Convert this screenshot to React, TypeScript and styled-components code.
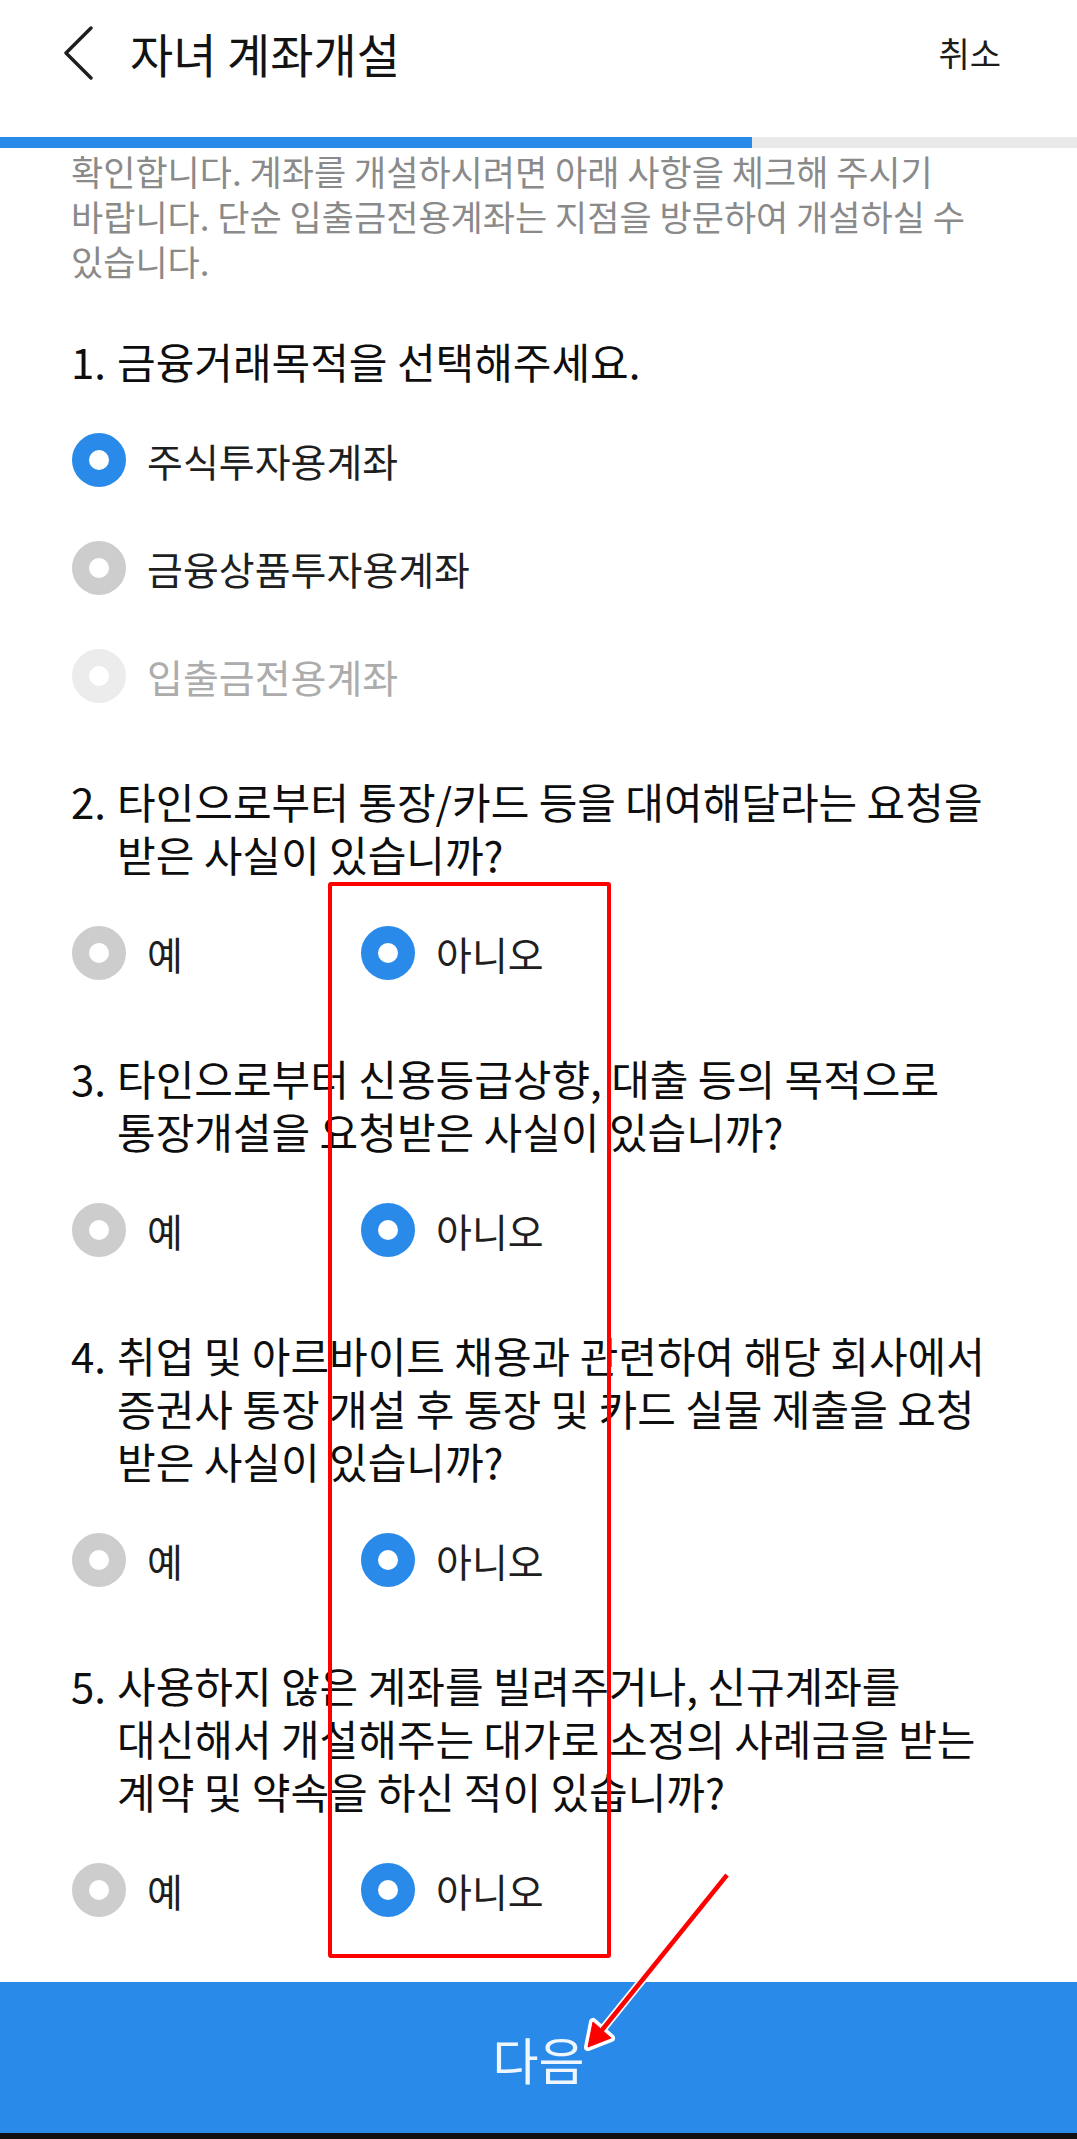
import React from "react";
import styled, { createGlobalStyle } from "styled-components";

const GlobalStyle = createGlobalStyle`
  html, body {
    margin: 0;
    padding: 0;
    background: #ffffff;
  }
  body {
    font-family: "Noto Sans CJK KR", "Noto Sans", "Liberation Sans", sans-serif;
    -webkit-font-smoothing: antialiased;
  }
  * { box-sizing: border-box; }
`;

const BLUE = "#2a8ae9";

const Page = styled.div`
  position: relative;
  width: 1077px;
  min-height: 2139px;
  display: flex;
  flex-direction: column;
  background: #fff;
  overflow: hidden;
`;

const Header = styled.header`
  height: 137px;
  padding: 0 76px 31px 62px;
  display: flex;
  align-items: center;
  background: #fff;
`;

const BackButton = styled.button`
  width: 40px;
  height: 56px;
  padding: 0;
  border: none;
  background: none;
  display: flex;
  align-items: center;
  justify-content: flex-start;
  color: #1e1e1e;
`;

const Title = styled.h1`
  margin: 0 0 0 28px;
  flex: 1;
  font-size: 47px;
  font-weight: 400;
  line-height: 60px;
  color: #131313;
  letter-spacing: 0;
`;

const CancelLink = styled.span`
  font-size: 34px;
  line-height: 44px;
  color: #1c1c1c;
`;

const ProgressTrack = styled.div`
  height: 11px;
  background: #e9e9e9;
  flex: none;
`;

const ProgressFill = styled.div`
  height: 100%;
  background: ${BLUE};
`;

const Main = styled.main`
  flex: 1;
  padding: 0 40px 0 71px;
`;

const Notice = styled.p`
  margin: 0;
  font-size: 35px;
  line-height: 45px;
  color: #8a8a8a;
`;

const Line = styled.span`
  display: block;
  white-space: nowrap;
`;

const Question = styled.section`
  margin-top: 43.5px;
  &:first-of-type {
    margin-top: 50.5px;
  }
`;

const Heading = styled.div`
  display: grid;
  grid-template-columns: 46px 1fr;
  font-size: 42px;
  line-height: 53px;
  color: #0e0e0e;
  font-weight: 400;
  margin-bottom: 19.5px;
`;

const Num = styled.span`
  white-space: nowrap;
`;

const OptionList = styled.div<{ $inline?: boolean }>`
  display: flex;
  flex-direction: ${(p) => (p.$inline ? "row" : "column")};
`;

const Option = styled.label<{ $inline?: boolean; $disabled?: boolean }>`
  height: 108px;
  width: ${(p) => (p.$inline ? "289px" : "auto")};
  display: flex;
  align-items: center;
  gap: 21px;
  padding-left: 1px;
  font-size: 39px;
  color: ${(p) => (p.$disabled ? "#acacac" : "#1f1f1f")};
`;

const Radio = styled.span<{ $state: "on" | "off" | "disabled" }>`
  width: 20px;
  height: 20px;
  flex: none;
  box-sizing: content-box;
  border-radius: 50%;
  background: #fff;
  border: 17px solid
    ${(p) =>
      p.$state === "on" ? BLUE : p.$state === "off" ? "#cdcdcd" : "#ececec"};
`;

const NextButton = styled.button`
  flex: none;
  height: 151px;
  width: 100%;
  border: none;
  background: ${BLUE};
  color: #eef7ff;
  font-family: inherit;
  font-size: 50px;
  font-weight: 400;
  padding: 0;
`;

const NavStrip = styled.div`
  height: 6px;
  background: #111;
  flex: none;
`;

const Highlight = styled.div`
  position: absolute;
  left: 328px;
  top: 882px;
  width: 283px;
  height: 1076px;
  border: 4px solid #ff0000;
  border-radius: 3px;
  pointer-events: none;
`;

const ArrowSvg = styled.svg`
  position: absolute;
  left: 560px;
  top: 1850px;
  pointer-events: none;
`;

type Q = {
  n: string;
  lines: string[];
};

const yesNo: Q[] = [
  { n: "2.", lines: ["타인으로부터 통장/카드 등을 대여해달라는 요청을", "받은 사실이 있습니까?"] },
  { n: "3.", lines: ["타인으로부터 신용등급상향, 대출 등의 목적으로", "통장개설을 요청받은 사실이 있습니까?"] },
  {
    n: "4.",
    lines: [
      "취업 및 아르바이트 채용과 관련하여 해당 회사에서",
      "증권사 통장 개설 후 통장 및 카드 실물 제출을 요청",
      "받은 사실이 있습니까?",
    ],
  },
  {
    n: "5.",
    lines: [
      "사용하지 않은 계좌를 빌려주거나, 신규계좌를",
      "대신해서 개설해주는 대가로 소정의 사례금을 받는",
      "계약 및 약속을 하신 적이 있습니까?",
    ],
  },
];

const QuestionHeading = ({ n, lines }: Q) => (
  <Heading>
    <Num>{n}</Num>
    <div>
      {lines.map((l) => (
        <Line key={l}>{l}</Line>
      ))}
    </div>
  </Heading>
);

export default function App() {
  return (
    <>
      <GlobalStyle />
      <Page>
        <Header>
          <BackButton aria-label="뒤로">
            <svg width="32" height="54" viewBox="0 0 32 54" fill="none">
              <path d="M29 2 L4 27 L29 52" stroke="#1e1e1e" strokeWidth="3.4" strokeLinecap="round" strokeLinejoin="round" />
            </svg>
          </BackButton>
          <Title>자녀 계좌개설</Title>
          <CancelLink>취소</CancelLink>
        </Header>
        <ProgressTrack>
          <ProgressFill style={{ width: `${(752 / 1077) * 100}%` }} />
        </ProgressTrack>
        <Main>
          <Notice>
            <Line>확인합니다. 계좌를 개설하시려면 아래 사항을 체크해 주시기</Line>
            <Line>바랍니다. 단순 입출금전용계좌는 지점을 방문하여 개설하실 수</Line>
            <Line>있습니다.</Line>
          </Notice>

          <Question>
            <QuestionHeading n="1." lines={["금융거래목적을 선택해주세요."]} />
            <OptionList>
              <Option>
                <Radio $state="on" />
                주식투자용계좌
              </Option>
              <Option>
                <Radio $state="off" />
                금융상품투자용계좌
              </Option>
              <Option $disabled>
                <Radio $state="disabled" />
                입출금전용계좌
              </Option>
            </OptionList>
          </Question>

          {yesNo.map((q) => (
            <Question key={q.n}>
              <QuestionHeading {...q} />
              <OptionList $inline>
                <Option $inline>
                  <Radio $state="off" />
                  예
                </Option>
                <Option $inline>
                  <Radio $state="on" />
                  아니오
                </Option>
              </OptionList>
            </Question>
          ))}
        </Main>
        <NextButton>다음</NextButton>
        <NavStrip />

        <Highlight />
        <ArrowSvg width="190" height="215" viewBox="0 0 190 215">
          <g stroke="#ffffff" strokeWidth="8" strokeLinejoin="round" fill="#ffffff">
            <line x1="167" y1="25" x2="42" y2="180" />
            <polygon points="28,197 51,188 33,172" />
          </g>
          <g stroke="#ff0000" strokeWidth="4.5" strokeLinejoin="round" fill="#ff0000">
            <line x1="167" y1="25" x2="42" y2="180" />
            <polygon points="28,197 51,188 33,172" strokeWidth="1" />
          </g>
        </ArrowSvg>
      </Page>
    </>
  );
}
